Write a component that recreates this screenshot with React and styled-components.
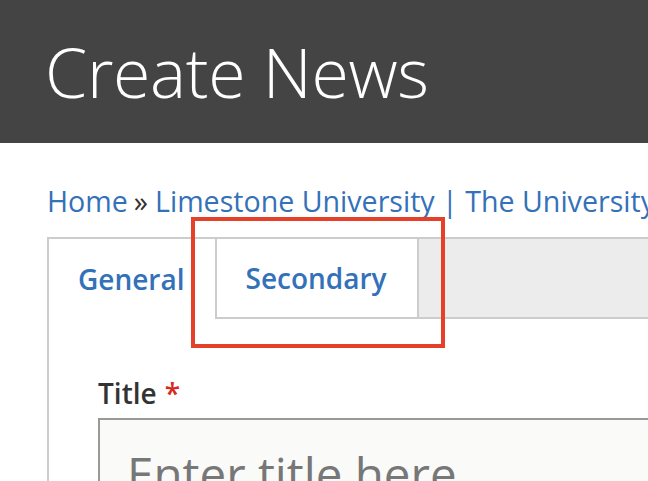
import React from "react";
import styled, { createGlobalStyle } from "styled-components";

let GlobalStyle = createGlobalStyle`
  html, body {
    margin: 0;
    padding: 0;
    background: #fff;
    overflow: hidden;
    font-family: "Open Sans", "Noto Sans", sans-serif;
  }
`;

let Header = styled.header`
  background-color: #444444;
  height: 143px;
  padding-left: 45px;
  box-sizing: border-box;
  display: flex;
  align-items: center;
`;

let PageTitle = styled.h1`
  margin: 0;
  color: #fff;
  font-size: 68px;
  font-weight: 300;
  letter-spacing: -0.3px;
  line-height: 1;
  white-space: nowrap;
`;

let Main = styled.main`
  padding: 38px 0 0 47px;
`;

let Breadcrumb = styled.nav`
  font-size: 28.6px;
  line-height: 40px;
  color: #333;
  white-space: nowrap;

  a {
    color: #3371b8;
    text-decoration: none;
  }
`;

let Sep = styled.span`
  margin: 0 7px 0 6px;
`;

let TabsBox = styled.div`
  position: relative;
  margin-top: 16px;
  width: 1000px;
  border-top: 2px solid #cccccc;
  border-left: 2px solid #cccccc;
`;

let TabBar = styled.ul`
  display: flex;
  margin: 0;
  padding: 0;
  list-style: none;
  height: 80px;
  background-color: #ececec;
`;

let Tab = styled.li`
  display: flex;
  align-items: center;
  padding: 0 30px 0 29px;
  background-color: #fff;
  color: #3371b8;
  font-size: 28px;
  font-weight: 600;
  box-sizing: border-box;
  border-left: ${(props) => (props.first ? "none" : "2px solid #cccccc")};
  border-bottom: ${(props) => (props.active ? "none" : "2px solid #cccccc")};
  border-right: ${(props) => (props.last ? "2px solid #cccccc" : "none")};
`;

let Filler = styled.li`
  flex: 1;
  border-bottom: 2px solid #cccccc;
`;

let Panel = styled.div`
  padding: 60px 0 0 49px;
  background: #fff;
`;

let Label = styled.label`
  display: block;
  font-size: 28px;
  font-weight: 600;
  color: #333;
  line-height: 1;
  margin-bottom: 11px;
`;

let Required = styled.span`
  color: #d9281f;
  margin-left: 8px;
  font-weight: 600;
`;

let TitleInput = styled.input`
  display: block;
  width: 800px;
  height: 90px;
  box-sizing: border-box;
  border: 2px solid #999;
  background-color: #fafaf9;
  padding: 21px 27px 0;
  font-family: "Open Sans", "Noto Sans", sans-serif;
  font-size: 47.5px;
  color: #333;
  outline: none;

  &::placeholder {
    color: #777;
  }
`;

let Highlight = styled.div`
  position: absolute;
  left: 142px;
  top: -22px;
  width: 254px;
  height: 131px;
  box-sizing: border-box;
  border: 4px solid #e5402a;
  pointer-events: none;
`;

export default function App() {
  return (
    <>
      <GlobalStyle />
      <Header>
        <PageTitle>Create News</PageTitle>
      </Header>
      <Main>
        <Breadcrumb>
          <a href="#">Home</a>
          <Sep>»</Sep>
          <a href="#">Limestone University | The University of Limestone</a>
        </Breadcrumb>
        <TabsBox>
          <TabBar>
            <Tab first active>
              General
            </Tab>
            <Tab last>Secondary</Tab>
            <Filler />
          </TabBar>
          <Panel>
            <Label>
              Title<Required>*</Required>
            </Label>
            <TitleInput placeholder="Enter title here" />
          </Panel>
          <Highlight />
        </TabsBox>
      </Main>
    </>
  );
}
